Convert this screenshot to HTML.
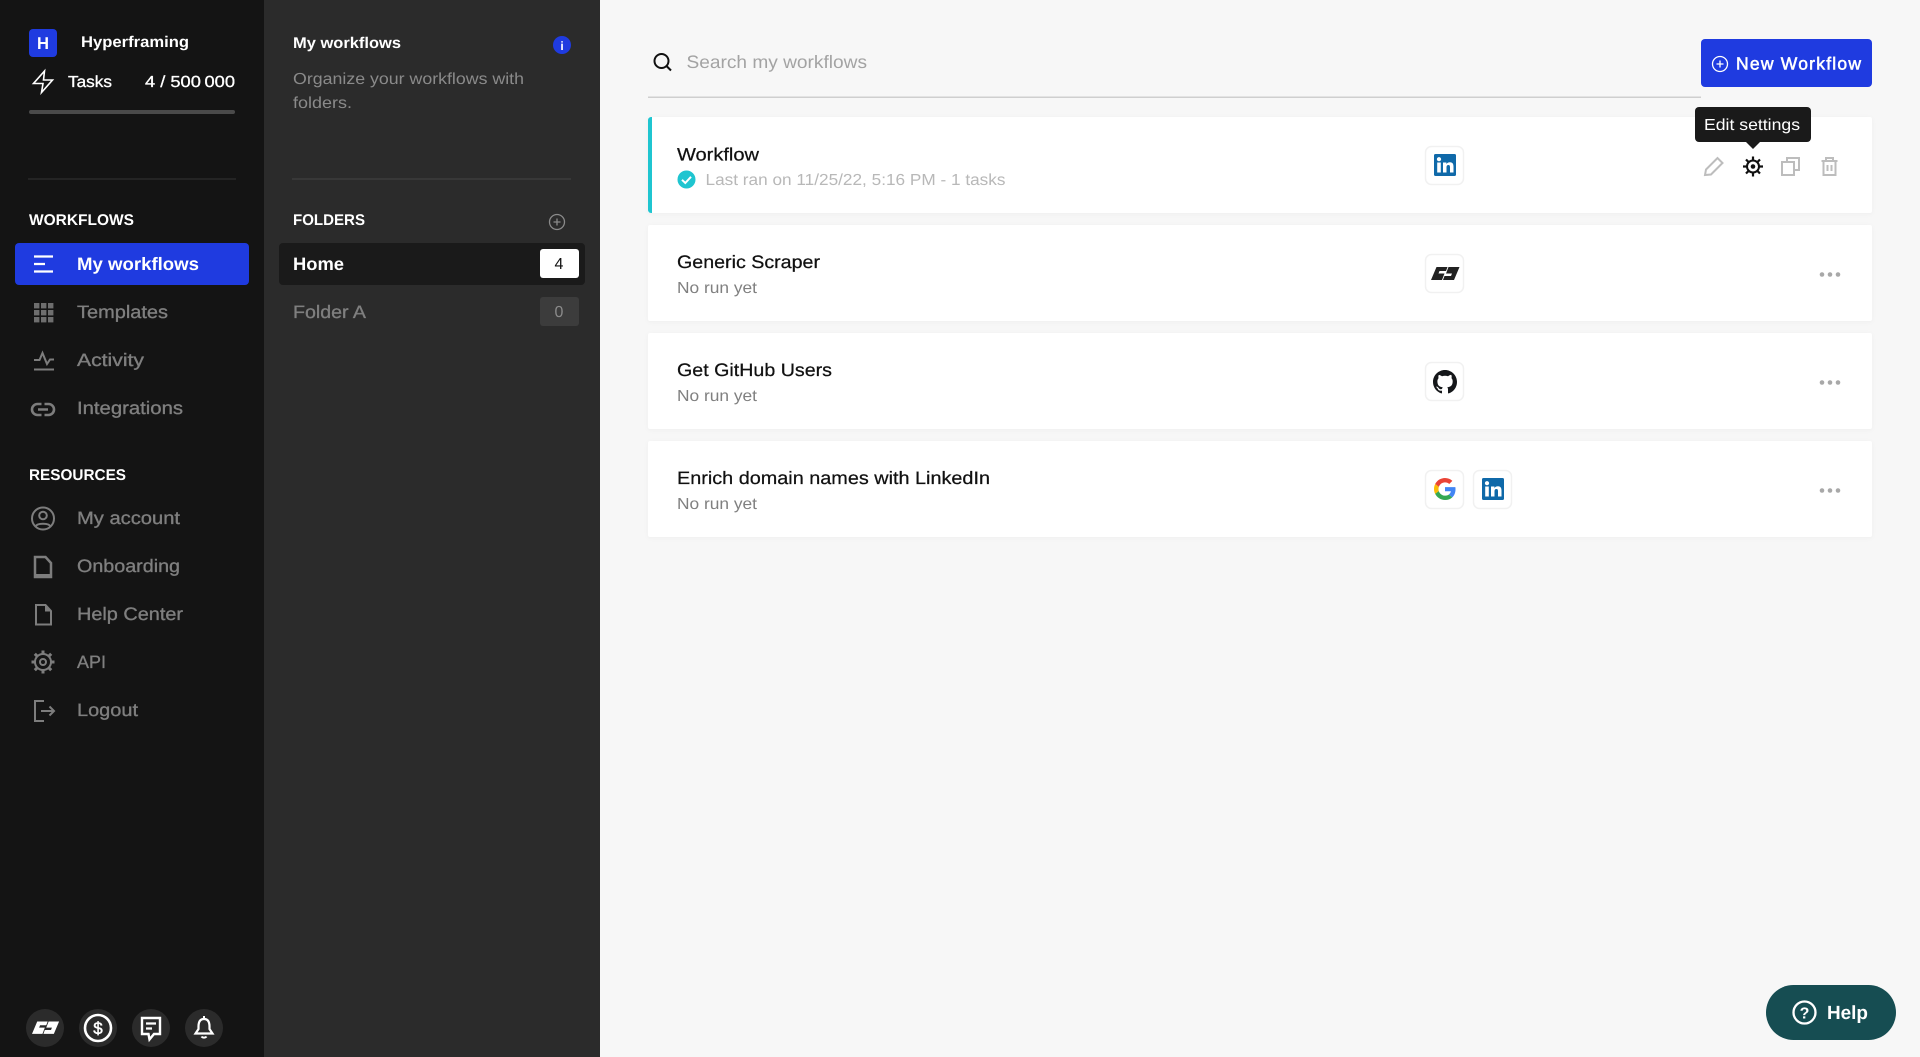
<!DOCTYPE html>
<html lang="en">
<head>
<meta charset="utf-8">
<title>Hyperframing - My workflows</title>
<style>
html,body{margin:0;padding:0;background:#f7f7f7;width:1920px;height:1057px;overflow:hidden}
svg{display:block}
text{font-family:"Liberation Sans",Arial,sans-serif;text-rendering:geometricPrecision}
.b{font-weight:700}
.m{stroke:currentColor;stroke-width:.3px}
.nav{fill:#7f7f7f;color:#7f7f7f;font-size:18px;stroke:#7f7f7f;stroke-width:.35px}
.sub{fill:#808080;font-size:16px}
.title{fill:#111;color:#111;font-size:18px;stroke:#111;stroke-width:.25px}
.ico{fill:none;stroke:#7d7d7d;stroke-width:2}
.act{fill:none;stroke:#bdbdbd;stroke-width:2}
.box{fill:#fff;stroke:#f1f1f1;stroke-width:1.5}
</style>
</head>
<body>
<svg xmlns="http://www.w3.org/2000/svg" width="1920" height="1057" viewBox="0 0 1920 1057">
<!-- backgrounds -->
<rect width="1920" height="1057" fill="#f7f7f7"/>
<rect width="264" height="1057" fill="#141414"/>
<rect x="264" width="336" height="1057" fill="#2b2b2b"/>

<!-- account header -->
<rect x="29" y="29" width="28" height="28" rx="4" fill="#1f3be0"/>
<text x="37" y="49" class="b" font-size="17" fill="#fff" textLength="12" lengthAdjust="spacingAndGlyphs">H</text>
<text x="81" y="47" class="b" font-size="15.5" fill="#fff" textLength="108" lengthAdjust="spacingAndGlyphs">Hyperframing</text>
<path d="M44.5 71 33.5 83.5H43L41.5 92.5 52.5 80H43.5Z" fill="none" stroke="#fff" stroke-width="1.6" stroke-linejoin="miter"/>
<text x="68" y="87" font-size="16" fill="#fff" class="m" style="color:#fff" textLength="44" lengthAdjust="spacingAndGlyphs">Tasks</text>
<text x="145" y="87" font-size="16" fill="#fff" class="m" style="color:#fff" textLength="90" lengthAdjust="spacingAndGlyphs">4 / 500&#8201;000</text>
<rect x="29" y="110" width="206" height="4" rx="2" fill="#4a4a4a"/>
<rect x="28" y="178.5" width="208" height="1" fill="#333"/>

<!-- workflows nav -->
<text x="29" y="225" class="b" font-size="15.5" fill="#fff" textLength="105" lengthAdjust="spacingAndGlyphs">WORKFLOWS</text>
<rect x="15" y="243" width="234" height="42" rx="4" fill="#1f3be0"/>
<path d="M34 256.5H53M34 264H45M34 271.5H53" stroke="#fff" stroke-width="2.2" fill="none"/>
<text x="77" y="270" class="b" font-size="18" fill="#fff" textLength="122" lengthAdjust="spacingAndGlyphs">My workflows</text>

<g fill="#6e6e6e">
<rect x="34" y="303" width="5.4" height="5.4"/><rect x="41" y="303" width="5.4" height="5.4"/><rect x="48" y="303" width="5.4" height="5.4"/>
<rect x="34" y="310" width="5.4" height="5.4"/><rect x="41" y="310" width="5.4" height="5.4"/><rect x="48" y="310" width="5.4" height="5.4"/>
<rect x="34" y="317" width="5.4" height="5.4"/><rect x="41" y="317" width="5.4" height="5.4"/><rect x="48" y="317" width="5.4" height="5.4"/>
</g>
<text x="77" y="318" class="nav" textLength="91" lengthAdjust="spacingAndGlyphs">Templates</text>

<path d="M34 369.5H54M34 360H39.5L42.5 353 47 364 50 359.5H54" class="ico"/>
<text x="77" y="366" class="nav" textLength="67" lengthAdjust="spacingAndGlyphs">Activity</text>

<path d="M41.5 404H37.5a5.5 5.500 0 0 0 0 11H41.5M44.5 404H48.5a5.5 5.500 0 0 1 0 11H44.5M38 409.500H48" fill="none" stroke="#7d7d7d" stroke-width="2.6"/>
<text x="77" y="414" class="nav" textLength="106" lengthAdjust="spacingAndGlyphs">Integrations</text>

<!-- resources nav -->
<text x="29" y="480" class="b" font-size="15.5" fill="#fff" textLength="97" lengthAdjust="spacingAndGlyphs">RESOURCES</text>

<circle cx="43" cy="518.500" r="11" class="ico"/>
<circle cx="43" cy="515.500" r="3.800" class="ico"/>
<path d="M35.500 526.500C37 522.800 49 522.800 50.500 526.500" class="ico"/>
<text x="77" y="524" class="nav" textLength="103" lengthAdjust="spacingAndGlyphs">My account</text>

<path d="M35 557H45.500L51 563V577H35Z" fill="none" stroke="#7d7d7d" stroke-width="2.500"/>
<rect x="34" y="574" width="18" height="4" fill="#7d7d7d"/>
<text x="77" y="572" class="nav" textLength="103" lengthAdjust="spacingAndGlyphs">Onboarding</text>

<path d="M36 605H45.500L51 611V624.500H36Z" class="ico"/>
<path d="M45 605V611.500H51.500" fill="#7d7d7d" stroke="none"/>
<text x="77" y="620" class="nav" textLength="106" lengthAdjust="spacingAndGlyphs">Help Center</text>

<g transform="translate(43 662)">
<circle r="8" class="ico" stroke-width="2.400"/>
<circle r="3" class="ico" stroke-width="2.200"/>
<path d="M0-11.500V-8M0 8V11.500M-11.500 0H-8M8 0H11.500M-8.200-8.200-5.700-5.700M5.700 5.700 8.200 8.200M-8.200 8.200-5.700 5.700M5.700-5.700 8.200-8.200" stroke="#7d7d7d" stroke-width="3" fill="none"/>
</g>
<text x="77" y="668" class="nav" textLength="29" lengthAdjust="spacingAndGlyphs">API</text>

<path d="M44 701H35V721H44M41 711H53.500M49.500 706.500 54 711 49.500 715.500" class="ico"/>
<text x="77" y="716" class="nav" textLength="61" lengthAdjust="spacingAndGlyphs">Logout</text>

<!-- bottom icons -->
<circle cx="45" cy="1028" r="19" fill="#2b2b2b"/>
<circle cx="98" cy="1028" r="19" fill="#2b2b2b"/>
<circle cx="151" cy="1028" r="19" fill="#2b2b2b"/>
<circle cx="204" cy="1028" r="19" fill="#2b2b2b"/>
<path transform="translate(32 1021.500) scale(.95)" d="M5.500 0H16.500L15 4H8.500L7.500 6.500H13.500L11 13H0ZM23 13H12L13.500 9H20L21 6.500H15L17.500 0H28.500Z" fill="#fff"/>
<circle cx="98" cy="1028" r="13" fill="none" stroke="#fff" stroke-width="2.600"/>
<text x="98" y="1034" font-size="17" fill="#fff" stroke="#fff" stroke-width=".5" text-anchor="middle">$</text>
<path d="M142 1018H160V1034H154L149.500 1039.500 148.500 1034H142Z" fill="none" stroke="#fff" stroke-width="2.400"/>
<path d="M146 1023.500H156M146 1028.500H152" stroke="#fff" stroke-width="2.200"/>
<path d="M204 1019C199.500 1019 198.500 1022.500 198.500 1026.500V1029L195.500 1033.500H212.500L209.500 1029V1026.500C209.500 1022.500 208.500 1019 204 1019Z" fill="none" stroke="#fff" stroke-width="2.200"/>
<path d="M204 1016V1018.500M201.500 1036.500C202.500 1038 205.500 1038 206.500 1036.500" stroke="#fff" stroke-width="2" fill="none"/>

<!-- folders panel -->
<text x="293" y="48" class="b" font-size="15.5" fill="#fff" textLength="108" lengthAdjust="spacingAndGlyphs">My workflows</text>
<circle cx="562" cy="45" r="9" fill="#1f3be0"/>
<text x="562" y="50" class="b" font-size="12" fill="#fff" text-anchor="middle">i</text>
<text x="293" y="84" font-size="16" fill="#8a8a8a" textLength="231" lengthAdjust="spacingAndGlyphs">Organize your workflows with</text>
<text x="293" y="108" font-size="16" fill="#8a8a8a" textLength="59" lengthAdjust="spacingAndGlyphs">folders.</text>
<rect x="292" y="178.500" width="279" height="1" fill="#444"/>
<text x="293" y="225" class="b" font-size="15.500" fill="#fff" textLength="72" lengthAdjust="spacingAndGlyphs">FOLDERS</text>
<circle cx="557" cy="222" r="7.500" fill="none" stroke="#8a8a8a" stroke-width="1.300"/>
<path d="M553.500 222H560.500M557 218.500V225.500" stroke="#8a8a8a" stroke-width="1.300"/>
<rect x="279" y="243" width="306" height="42" rx="4" fill="#1a1a1a"/>
<text x="293" y="270" class="b" font-size="18" fill="#fff" textLength="51" lengthAdjust="spacingAndGlyphs">Home</text>
<rect x="540" y="249" width="39" height="29" rx="3" fill="#fff"/>
<text x="559" y="269" font-size="16" fill="#111" text-anchor="middle">4</text>
<text x="293" y="318" class="nav" textLength="73" lengthAdjust="spacingAndGlyphs">Folder A</text>
<rect x="540" y="297" width="39" height="29" rx="3" fill="#3c3c3c"/>
<text x="559" y="317" font-size="16" fill="#8a8a8a" text-anchor="middle">0</text>

<!-- search -->
<circle cx="661.500" cy="61" r="7" fill="none" stroke="#111" stroke-width="2"/>
<path d="M666.500 66 671 70.500" stroke="#111" stroke-width="2"/>
<text x="686.500" y="68" font-size="18" fill="#a3a3a3" textLength="180.500" lengthAdjust="spacingAndGlyphs">Search my workflows</text>
<rect x="648" y="96.500" width="1053" height="1.500" fill="#cfcfcf"/>

<!-- new workflow -->
<rect x="1701" y="39" width="171" height="48" rx="4" fill="#1f3be0"/>
<circle cx="1720" cy="64" r="7.500" fill="none" stroke="#fff" stroke-width="1.300"/>
<path d="M1716.500 64H1723.500M1720 60.500V67.500" stroke="#fff" stroke-width="1.300"/>
<text x="1736" y="69.500" font-size="17.500" fill="#fff" stroke="#fff" stroke-width=".55" textLength="125" lengthAdjust="spacing">New Workflow</text>

<!-- cards -->
<g style="filter:drop-shadow(0 1px 2px rgba(0,0,0,.035))">
<rect x="648" y="117" width="1224" height="96" rx="2" fill="#fff"/>
<rect x="648" y="225" width="1224" height="96" rx="2" fill="#fff"/>
<rect x="648" y="333" width="1224" height="96" rx="2" fill="#fff"/>
<rect x="648" y="441" width="1224" height="96" rx="2" fill="#fff"/>
</g>
<path d="M652 117H651a3 3 0 0 0-3 3V210a3 3 0 0 0 3 3H652Z" fill="#1fc5d0"/>

<!-- card 1 -->
<text x="677" y="160.500" class="title" textLength="82" lengthAdjust="spacingAndGlyphs">Workflow</text>
<circle cx="686.500" cy="179.500" r="9" fill="#1fc5d0"/>
<path d="M682 179.800 685.300 183 691 176.800" fill="none" stroke="#fff" stroke-width="2"/>
<text x="705.500" y="185" font-size="16" fill="#b8b8b8" textLength="300" lengthAdjust="spacingAndGlyphs">Last ran on 11/25/22, 5:16 PM - 1 tasks</text>
<rect x="1425.500" y="146.500" width="38" height="38" rx="6" class="box"/>
<g transform="translate(1434 154)">
<rect width="22" height="22" rx="1.500" fill="#0f69a9"/>
<circle cx="5" cy="5.200" r="2.100" fill="#fff"/>
<rect x="3.200" y="8.500" width="3.600" height="10" fill="#fff"/>
<path d="M9 8.500H12.400V10C13 9 14.300 8.200 16 8.200 18.700 8.200 19.500 10 19.500 12.700V18.500H16V13.400C16 12 15.700 11 14.400 11 13 11 12.500 12 12.500 13.400V18.500H9Z" fill="#fff"/>
</g>
<path d="M1705 175 1706 169.500 1717.500 158 1722.500 163 1711 174.500Z" class="act"/>
<g transform="translate(1753 166.500)">
<circle r="6" fill="none" stroke="#111" stroke-width="2"/>
<circle r="2.300" fill="#111"/>
<path d="M0-10V-6M0 6V10M-10 0H-6M6 0H10M-7-7-4.300-4.300M4.300 4.300 7 7M-7 7-4.300 4.300M4.300-4.300 7-7" stroke="#111" stroke-width="2.200" fill="none"/>
</g>
<path d="M1782 162H1794V175H1782ZM1787 162V158H1799V170H1794" class="act"/>
<path d="M1821.500 161H1837.500M1826 161V158H1833V161M1823.500 161V175H1835.500V161M1827.500 165V171M1831.500 165V171" class="act"/>

<!-- tooltip -->
<rect x="1695" y="107" width="116" height="35" rx="4" fill="#1a1a1a"/>
<path d="M1746 142H1760L1753 149Z" fill="#1a1a1a"/>
<text x="1704" y="130" font-size="16" fill="#fff" textLength="96" lengthAdjust="spacingAndGlyphs">Edit settings</text>

<!-- card 2 -->
<text x="677" y="268" class="title" textLength="143" lengthAdjust="spacingAndGlyphs">Generic Scraper</text>
<text x="677" y="293" class="sub" textLength="80" lengthAdjust="spacingAndGlyphs">No run yet</text>
<rect x="1425.500" y="254.500" width="38" height="38" rx="6" class="box"/>
<path transform="translate(1431 267)" d="M5.500 0H16.500L15 4H8.500L7.500 6.500H13.500L11 13H0ZM23 13H12L13.500 9H20L21 6.500H15L17.500 0H28.500Z" fill="#222"/>
<g fill="#a8a8a8"><circle cx="1822" cy="274.500" r="2.300"/><circle cx="1830" cy="274.500" r="2.300"/><circle cx="1838" cy="274.500" r="2.300"/></g>

<!-- card 3 -->
<text x="677" y="376" class="title" textLength="155" lengthAdjust="spacingAndGlyphs">Get GitHub Users</text>
<text x="677" y="401" class="sub" textLength="80" lengthAdjust="spacingAndGlyphs">No run yet</text>
<rect x="1425.500" y="362.500" width="38" height="38" rx="6" class="box"/>
<path transform="translate(1433 370) scale(1.500)" fill="#15171a" d="M8 0C3.580 0 0 3.580 0 8c0 3.540 2.290 6.530 5.470 7.590.4.070.55-.17.55-.38 0-.19-.01-.82-.01-1.490-2.010.37-2.530-.49-2.690-.94-.09-.23-.48-.94-.82-1.130-.28-.15-.68-.52-.01-.53.63-.01 1.080.58 1.230.82.72 1.210 1.870.87 2.330.66.07-.52.28-.87.51-1.070-1.780-.2-3.640-.89-3.640-3.950 0-.87.31-1.590.82-2.150-.08-.2-.36-1.020.08-2.120 0 0 .67-.21 2.200.82.64-.18 1.320-.27 2-.27.68 0 1.360.09 2 .27 1.530-1.040 2.200-.82 2.200-.82.44 1.100.16 1.920.08 2.120.51.56.82 1.270.82 2.150 0 3.070-1.870 3.750-3.650 3.950.29.25.54.73.54 1.480 0 1.070-.01 1.930-.01 2.200 0 .21.15.46.55.38A8.013 8.013 0 0016 8c0-4.420-3.580-8-8-8z"/>
<g fill="#a8a8a8"><circle cx="1822" cy="382.500" r="2.300"/><circle cx="1830" cy="382.500" r="2.300"/><circle cx="1838" cy="382.500" r="2.300"/></g>

<!-- card 4 -->
<text x="677" y="484" class="title" textLength="313" lengthAdjust="spacingAndGlyphs">Enrich domain names with LinkedIn</text>
<text x="677" y="509" class="sub" textLength="80" lengthAdjust="spacingAndGlyphs">No run yet</text>
<rect x="1425.500" y="470.500" width="38" height="38" rx="6" class="box"/>
<g transform="translate(1434 478) scale(.4583)">
<path fill="#EA4335" d="M24 9.500c3.540 0 6.710 1.220 9.210 3.600l6.850-6.850C35.900 2.380 30.470 0 24 0 14.620 0 6.510 5.380 2.560 13.220l7.980 6.190C12.430 13.720 17.740 9.500 24 9.500z"/>
<path fill="#4285F4" d="M46.980 24.550c0-1.570-.15-3.090-.38-4.550H24v9.020h12.940c-.58 2.960-2.260 5.480-4.780 7.180l7.730 6c4.510-4.180 7.090-10.360 7.090-17.650z"/>
<path fill="#FBBC05" d="M10.530 28.590c-.48-1.450-.76-2.990-.76-4.590s.27-3.140.76-4.590l-7.980-6.190C.92 16.460 0 20.120 0 24c0 3.880.92 7.540 2.560 10.780l7.970-6.190z"/>
<path fill="#34A853" d="M24 48c6.480 0 11.930-2.130 15.890-5.810l-7.730-6c-2.150 1.450-4.920 2.300-8.160 2.300-6.260 0-11.570-4.220-13.470-9.910l-7.980 6.190C6.510 42.620 14.620 48 24 48z"/>
</g>
<rect x="1473.500" y="470.500" width="38" height="38" rx="6" class="box"/>
<g transform="translate(1482 478)">
<rect width="22" height="22" rx="1.500" fill="#0f69a9"/>
<circle cx="5" cy="5.200" r="2.100" fill="#fff"/>
<rect x="3.200" y="8.500" width="3.600" height="10" fill="#fff"/>
<path d="M9 8.500H12.400V10C13 9 14.300 8.200 16 8.200 18.700 8.200 19.500 10 19.500 12.700V18.500H16V13.400C16 12 15.700 11 14.400 11 13 11 12.500 12 12.500 13.400V18.500H9Z" fill="#fff"/>
</g>
<g fill="#a8a8a8"><circle cx="1822" cy="490.500" r="2.300"/><circle cx="1830" cy="490.500" r="2.300"/><circle cx="1838" cy="490.500" r="2.300"/></g>

<!-- help -->
<rect x="1766" y="985" width="130" height="55" rx="27.500" fill="#164d52"/>
<circle cx="1804.500" cy="1012.500" r="11" fill="none" stroke="#fff" stroke-width="2.300"/>
<text x="1804.500" y="1018.500" class="b" font-size="16" fill="#fff" text-anchor="middle">?</text>
<text x="1827" y="1019" class="b" font-size="19" fill="#fff" textLength="41" lengthAdjust="spacingAndGlyphs">Help</text>
</svg>
</body>
</html>
